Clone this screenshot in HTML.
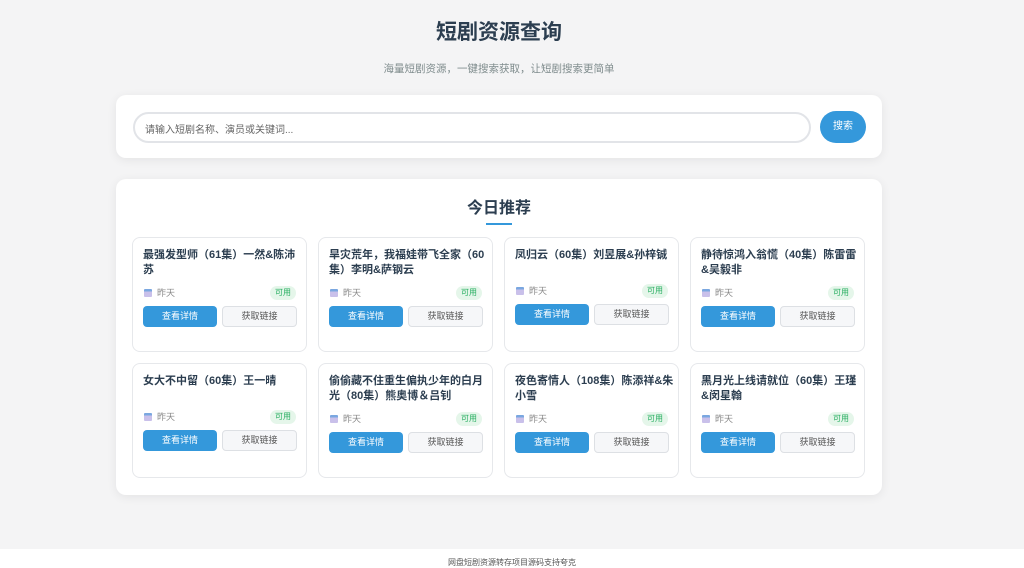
<!DOCTYPE html>
<html><head><meta charset="utf-8"><style>
*{box-sizing:border-box;margin:0;padding:0}
html,body{width:1024px;height:568px;overflow:hidden}
body{background:#f4f4f5;font-family:"Liberation Sans","Noto Sans CJK SC",sans-serif;position:relative;color:#2c3e50}
h1{position:absolute;top:19px;left:0;width:998px;text-align:center;font-size:21px;font-weight:bold;color:#2c3e50;line-height:28px}
.sub{position:absolute;top:61px;width:998px;text-align:center;font-size:10.5px;color:#7f8c8d}
.panel{position:absolute;left:116px;width:766px;background:#fff;border-radius:10px;box-shadow:0 2px 10px rgba(0,0,0,.07)}
.inp{position:absolute;left:17px;top:17px;width:678px;height:31px;border:2px solid #e2e4e8;border-radius:16px;font-size:10px;color:#666;padding:7px 10px}
.btn{position:absolute;left:704px;top:16px;width:46px;height:32px;background:#3498db;border-radius:16px;color:#fff;font-size:10px;text-align:center;line-height:32px}
.h2{position:absolute;top:20px;width:766px;text-align:center;font-size:16px;font-weight:bold;line-height:20px}
.ul{position:absolute;left:370px;top:44px;width:26px;height:2px;background:#3498db}
.card{position:absolute;width:175px;height:115px;border:1px solid #e6e8eb;border-radius:8px;background:#fff;padding:10px 8px 10px 10px}
.t{font-size:11px;font-weight:bold;line-height:15px;height:38px;color:#2c3e50;white-space:nowrap}
.m{position:relative;height:16px;font-size:9px;color:#888;line-height:14px;padding-left:14px;margin-right:2px}
.m i{position:absolute;left:1px;top:3px;width:8px;height:8px;background:linear-gradient(#7aa7e0 0 30%,#c9c0ea 30%);border-radius:1px}
.m b{position:absolute;right:0;top:0;font-weight:normal;background:#e5f6ea;color:#27ae60;font-size:8px;border-radius:8px;padding:0 5px;line-height:14px}
.bs{margin-top:4px;height:21px;position:relative}
.b1{position:absolute;left:0;width:74px;height:21px;background:#3498db;border-radius:4px;color:#fff;font-size:9px;text-align:center;line-height:21px}
.b2{position:absolute;left:79px;width:75px;height:21px;background:#f6f7f9;border:1px solid #dde0e4;border-radius:4px;color:#555;font-size:9px;text-align:center;line-height:19px}
.foot{position:absolute;top:549px;left:0;width:1024px;height:19px;background:#fff;text-align:center;font-size:8px;color:#555;line-height:28px}
</style></head><body>
<h1>短剧资源查询</h1>
<div class="sub">海量短剧资源，一键搜索获取，让短剧搜索更简单</div>
<div class="panel" style="top:95px;height:63px"><div class="inp">请输入短剧名称、演员或关键词...</div><div class="btn">搜索</div></div>
<div class="panel" style="top:179px;height:316px">
<div class="h2">今日推荐</div><div class="ul"></div>
<div class="card" style="left:16px;top:58px"><div class="t">最强发型师（61集）一然&amp;陈沛<br>苏</div><div class="m"><i></i>昨天<b>可用</b></div><div class="bs"><div class="b1">查看详情</div><div class="b2">获取链接</div></div></div>
<div class="card" style="left:202px;top:58px"><div class="t">旱灾荒年，我福娃带飞全家（60<br>集）李明&amp;萨钢云</div><div class="m"><i></i>昨天<b>可用</b></div><div class="bs"><div class="b1">查看详情</div><div class="b2">获取链接</div></div></div>
<div class="card" style="left:388px;top:58px"><div class="t" style="height:36px">凤归云（60集）刘昱展&amp;孙梓铖</div><div class="m"><i></i>昨天<b>可用</b></div><div class="bs"><div class="b1">查看详情</div><div class="b2">获取链接</div></div></div>
<div class="card" style="left:574px;top:58px"><div class="t">静待惊鸿入翁慌（40集）陈雷雷<br>&amp;吴毅非</div><div class="m"><i></i>昨天<b>可用</b></div><div class="bs"><div class="b1">查看详情</div><div class="b2">获取链接</div></div></div>
<div class="card" style="left:16px;top:184px"><div class="t" style="height:36px">女大不中留（60集）王一晴</div><div class="m"><i></i>昨天<b>可用</b></div><div class="bs"><div class="b1">查看详情</div><div class="b2">获取链接</div></div></div>
<div class="card" style="left:202px;top:184px"><div class="t">偷偷藏不住重生偏执少年的白月<br>光（80集）熊奥博＆吕钊</div><div class="m"><i></i>昨天<b>可用</b></div><div class="bs"><div class="b1">查看详情</div><div class="b2">获取链接</div></div></div>
<div class="card" style="left:388px;top:184px"><div class="t">夜色寄情人（108集）陈添祥&amp;朱<br>小雪</div><div class="m"><i></i>昨天<b>可用</b></div><div class="bs"><div class="b1">查看详情</div><div class="b2">获取链接</div></div></div>
<div class="card" style="left:574px;top:184px"><div class="t">黑月光上线请就位（60集）王瑾<br>&amp;闵星翰</div><div class="m"><i></i>昨天<b>可用</b></div><div class="bs"><div class="b1">查看详情</div><div class="b2">获取链接</div></div></div>
</div>
<div class="foot">网盘短剧资源转存项目源码支持夸克</div>
</body></html>
